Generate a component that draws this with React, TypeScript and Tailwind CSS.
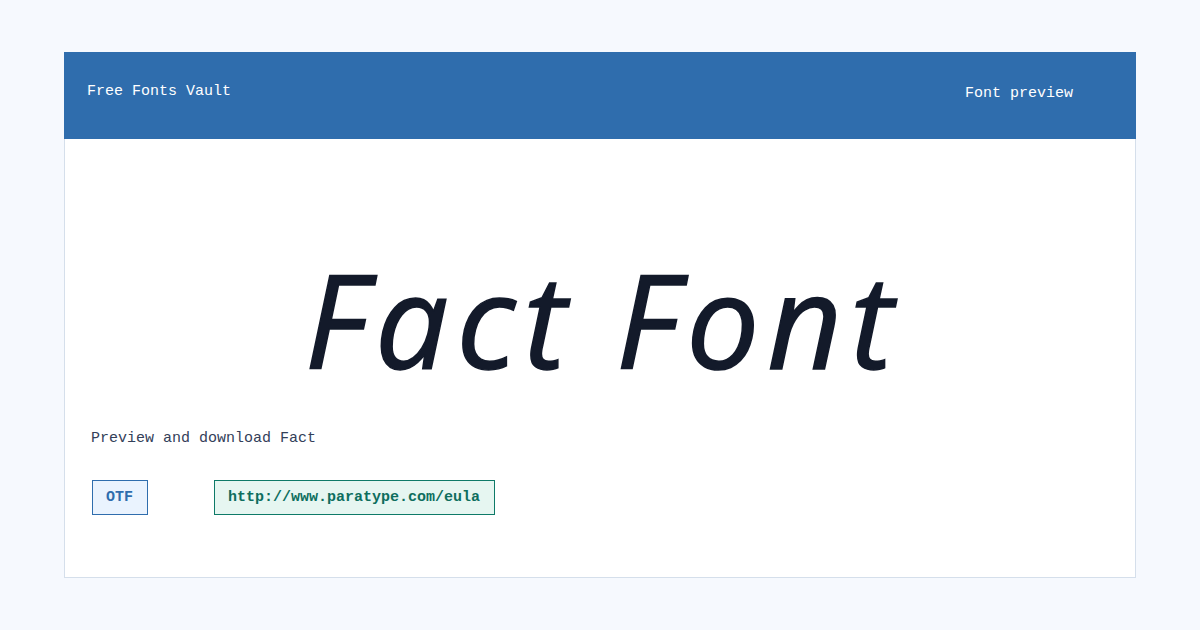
import React from "react";

const mono = { fontFamily: '"Liberation Mono", "DejaVu Sans Mono", monospace' };

export default function App() {
  return (
    <div className="min-h-[630px] w-[1200px] bg-[#f6f9fe] pt-[52px]">
      <div className="mx-[64px] flex h-[526px] flex-col border border-[#d5dfeb] bg-white">
        <header
          className="-mx-px -mt-px flex h-[87px] items-start justify-between bg-[#2f6dad] pl-[23px] pr-[63px] text-[15px] leading-[17px] text-white"
          style={mono}
        >
          <span className="mt-[31px]">Free Fonts Vault</span>
          <span className="mt-[33px]">Font preview</span>
        </header>

        <div className="flex h-[245px] items-end justify-center">
          <h1
            className="pl-[6px] text-[130px] italic leading-none tracking-[8px] text-[#131a2a] [-webkit-text-stroke:1.5px_#131a2a]"
            style={{ fontFamily: '"Open Sans", "Noto Sans", sans-serif' }}
          >
            Fact Font
          </h1>
        </div>

        <div className="px-[26px]" style={mono}>
          <p className="mt-[46px] text-[15px] leading-[17px] text-[#334059]">Preview and download Fact</p>
          <div className="mt-[33px] flex gap-[66px] pl-px">
            <span className="border border-[#2f6dad] bg-[#eaf3fe] pl-[13px] pr-[14px] py-[8px] text-[15px] font-bold leading-[17px] text-[#2f6dad]">
              OTF
            </span>
            <span className="border border-[#0e7a68] bg-[#e6f6f1] pl-[13px] pr-[14px] py-[8px] text-[15px] font-bold leading-[17px] text-[#0e6e5e]">
              http://www.paratype.com/eula
            </span>
          </div>
        </div>
      </div>
    </div>
  );
}
